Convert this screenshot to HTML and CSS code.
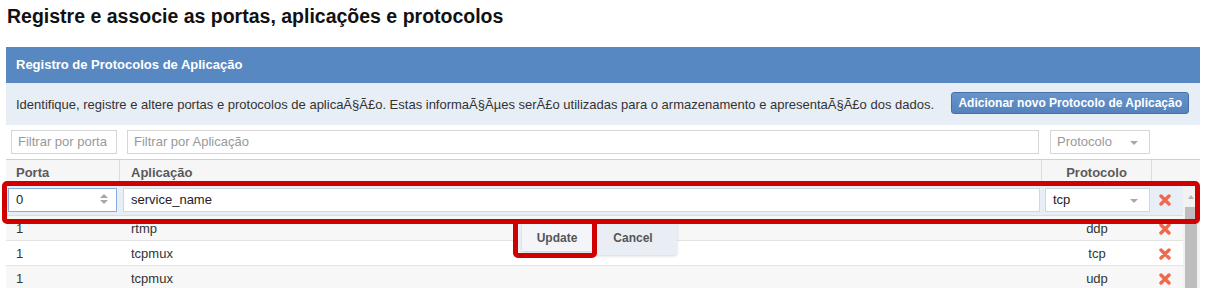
FILE: index.html
```html
<!DOCTYPE html>
<html lang="pt">
<head>
<meta charset="utf-8">
<title>Registro de Protocolos</title>
<link rel="stylesheet" href="styles.css">
</head>
<body>
<h1 class="title">Registre e associe as portas, aplicações e protocolos</h1>
<section class="panel">
  <div class="panel-head">Registro de Protocolos de Aplicação</div>
  <div class="panel-desc">
    <span>Identifique, registre e altere portas e protocolos de aplicaÃ§Ã£o. Estas informaÃ§Ãµes serÃ£o utilizadas para o armazenamento e apresentaÃ§Ã£o dos dados.</span>
    <button class="btn-primary" type="button">Adicionar novo Protocolo de Aplicação</button>
  </div>
  <div class="filters">
    <div class="field f-port">Filtrar por porta</div>
    <div class="field f-app">Filtrar por Aplicação</div>
    <div class="field f-proto">Protocolo<span class="caret"></span></div>
  </div>
  <div class="thead">
    <div class="th">Porta</div>
    <div class="th">Aplicação</div>
    <div class="th center">Protocolo</div>
    <div class="th"></div>
  </div>
  <div class="tbody">
    <div class="rows">
      <div class="row edit">
        <div class="cell cell-port"><div class="input focus">0<span class="spin"><i class="up"></i><i class="down"></i></span></div></div>
        <div class="cell cell-app"><div class="input">service_name</div></div>
        <div class="cell cell-proto"><div class="input">tcp<span class="caret"></span></div></div>
        <div class="cell del"><svg class="x" viewBox="0 0 12 12"><path d="M2 2 L10 10 M10 2 L2 10"/></svg></div>
      </div>
      <div class="row alt">
        <div class="cell">1</div><div class="cell">rtmp</div><div class="cell center">ddp</div>
        <div class="cell del"><svg class="x" viewBox="0 0 12 12"><path d="M2 2 L10 10 M10 2 L2 10"/></svg></div>
      </div>
      <div class="row">
        <div class="cell">1</div><div class="cell">tcpmux</div><div class="cell center">tcp</div>
        <div class="cell del"><svg class="x" viewBox="0 0 12 12"><path d="M2 2 L10 10 M10 2 L2 10"/></svg></div>
      </div>
      <div class="row alt">
        <div class="cell">1</div><div class="cell">tcpmux</div><div class="cell center">udp</div>
        <div class="cell del"><svg class="x" viewBox="0 0 12 12"><path d="M2 2 L10 10 M10 2 L2 10"/></svg></div>
      </div>
    </div>
    <div class="scrollbar"><span class="arrow-up"></span><div class="thumb"></div></div>
  </div>
  <div class="popup">
    <button class="pbtn update" type="button">Update</button>
    <button class="pbtn cancel" type="button">Cancel</button>
  </div>
</section>
<div class="mark mark-row"></div>
<div class="mark mark-update"></div>
</body>
</html>
```

FILE: styles.css
```css
html, body {
  margin: 0;
  padding: 0;
  background: #fff;
  overflow: hidden;
}
body {
  font-family: "Liberation Sans", Arial, sans-serif;
  color: #333;
  font-size: 13px;
  position: relative;
  height: 288px;
}
.title {
  margin: 0;
  padding: 4px 0 0 7px;
  height: 43px;
  font-size: 19.5px;
  line-height: 24px;
  font-weight: bold;
  color: #111;
}
.panel {
  position: relative;
  margin-left: 6px;
  width: 1194px;
}
.panel-head {
  height: 36px;
  line-height: 36px;
  background: #5888c2;
  color: #fff;
  font-weight: bold;
  font-size: 13px;
  padding-left: 10px;
}
.panel-desc {
  height: 42px;
  background: #e8eef6;
  display: flex;
  align-items: center;
  justify-content: space-between;
  padding: 0 11px 0 10px;
  font-size: 13px;
  color: #333;
}
.btn-primary {
  height: 22px;
  padding: 0 6px;
  border: 1px solid #4671a6;
  border-radius: 3px;
  background: linear-gradient(#6894cb, #5482bc);
  color: #fff;
  font-family: inherit;
  font-weight: bold;
  font-size: 12px;
  margin-top: -2px;
}
.filters {
  height: 34px;
  display: flex;
  align-items: center;
  gap: 10px;
  padding-left: 5px;
  background: #fff;
}
.field {
  box-sizing: border-box;
  height: 24px;
  border: 1px solid #d6d6d6;
  color: #999;
  font-size: 13px;
  line-height: 22px;
  padding-left: 6px;
  position: relative;
  background: #fff;
}
.f-port { width: 106px; }
.f-app { width: 912px; }
.f-proto { width: 100px; margin-left: 1px; }
.caret {
  position: absolute;
  right: 11px;
  top: 10px;
  border-left: 4px solid transparent;
  border-right: 4px solid transparent;
  border-top: 4px solid #a8a8a8;
}
.thead {
  display: grid;
  grid-template-columns: 114px 922px 110px 48px;
  height: 26px;
  background: #f6f6f6;
  border-top: 1px solid #cfcfcf;
  box-sizing: border-box;
}
.th {
  font-weight: bold;
  color: #5a5a5a;
  font-size: 13px;
  line-height: 26px;
  padding-left: 10px;
  border-right: 1px solid #dcdcdc;
}
.th:nth-child(2) { padding-left: 11px; }
.th:last-child { border-right: 0; }
.th.center { text-align: center; padding-left: 0; }
.tbody {
  display: flex;
}
.rows {
  width: 1177px;
}
.row {
  display: grid;
  grid-template-columns: 114px 922px 110px 31px;
  height: 25px;
  background: #fff;
  border-bottom: 1px solid #e4e4e4;
  box-sizing: border-box;
}
.row.alt { background: #f7f7f7; }
.row.edit {
  height: 31px;
  background: #e8eef6;
  align-items: center;
  border-bottom: 1px solid #d8dde4;
}
.cell {
  line-height: 25px;
  padding-left: 10px;
  font-size: 13px;
  color: #333;
}
.row .cell:nth-child(2) { padding-left: 11px; }
.cell.center { text-align: center; padding-left: 0; }
.row.edit .cell { padding: 0; }
.row.edit .cell-port { padding-left: 2px; }
.row.edit .cell-app { padding-left: 3px; padding-right: 2px; }
.row.edit .cell-proto { padding-left: 3px; padding-right: 2px; }
.input {
  box-sizing: border-box;
  height: 24px;
  background: #fff;
  border: 1px solid #d3d7dc;
  line-height: 22px;
  padding-left: 7px;
  color: #222;
  font-size: 13px;
  position: relative;
}
.cell-port .input { width: 109px; }
.input.focus { border-color: #86aee0; }
.spin {
  position: absolute;
  right: 8px;
  top: 5px;
  display: flex;
  flex-direction: column;
  gap: 2px;
}
.spin i {
  display: block;
  border-left: 4px solid transparent;
  border-right: 4px solid transparent;
}
.spin .up { border-bottom: 4px solid #a8a8a8; }
.spin .down { border-top: 4px solid #a8a8a8; }
.cell.del {
  padding: 0;
  display: flex;
  align-items: center;
  justify-content: center;
}
.x {
  width: 12px;
  height: 12px;
  margin-left: -6px;
}
.x path {
  stroke: #f0694c;
  stroke-width: 3.4;
  stroke-linecap: round;
  fill: none;
}
.scrollbar {
  width: 17px;
  position: relative;
  background: #f2f2f2;
}
.arrow-up {
  position: absolute;
  left: 5px;
  top: 10px;
  border-left: 3px solid transparent;
  border-right: 3px solid transparent;
  border-bottom: 4px solid #b5b5b5;
}
.thumb {
  position: absolute;
  left: 2px;
  right: 3px;
  top: 22px;
  bottom: 0;
  background: #bdbdbd;
}
.popup {
  position: absolute;
  left: 511px;
  top: 173px;
  width: 160px;
  height: 35px;
  background: #e9eef5;
  box-shadow: 0 1px 3px rgba(120, 140, 170, 0.35);
  border-radius: 3px;
  display: flex;
  align-items: center;
  gap: 6px;
  padding: 0 5px 0 5px;
  box-sizing: border-box;
}
.pbtn {
  height: 27px;
  border: 0;
  font-family: inherit;
  font-weight: bold;
  font-size: 12px;
  color: #555;
  background: #f3f5f8;
  box-shadow: 0 1px 2px rgba(0, 0, 0, 0.12);
}
.pbtn.update { width: 70px; }
.pbtn.cancel { width: 70px; background: #e9eef5; box-shadow: none; }
.mark {
  position: absolute;
  border: 5px solid #d10000;
  border-radius: 5px;
  box-sizing: border-box;
}
.mark-row {
  left: 2px;
  top: 181px;
  width: 1198px;
  height: 43px;
}
.mark-update {
  left: 513px;
  top: 219px;
  width: 84px;
  height: 39px;
}
```
